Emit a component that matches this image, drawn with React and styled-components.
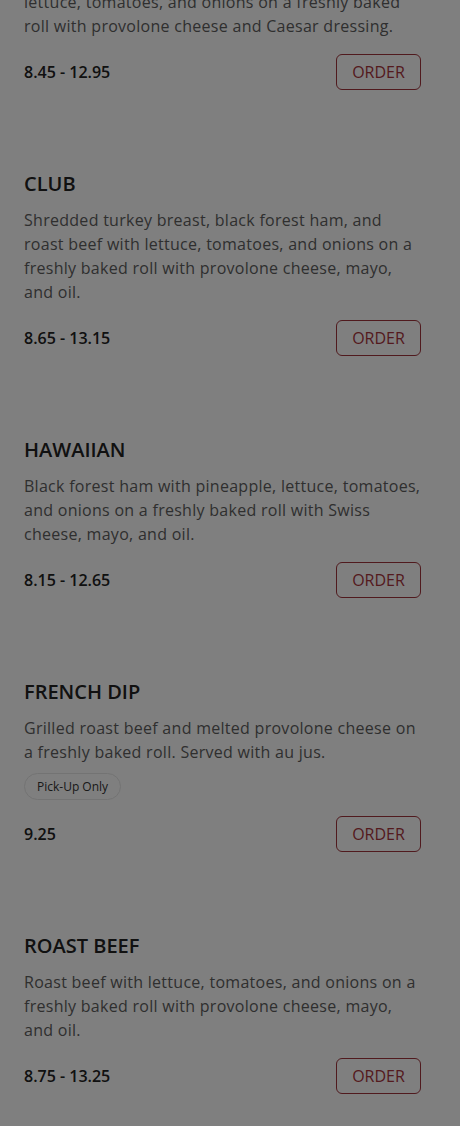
import styled, { createGlobalStyle } from 'styled-components';

const GlobalStyle = createGlobalStyle`
    * { box-sizing: border-box; }
    body {
        margin: 0;
        background: #ffffff;
        font-family: "Open Sans", "Liberation Sans", sans-serif;
        overflow: hidden;
    }
`;

const Page = styled.div`
    width: 460px;
    height: 1126px;
    overflow: hidden;
    background: #ffffff;
`;

// the list is scrolled a little, so the first item starts above the view
const MenuList = styled.div`
    margin-top: -10px;
    padding: 0 39px 0 24px;
`;

const Item = styled.div`
    padding: ${(p) => (p.$first ? '0' : '80px')} 0 0;
`;

const Title = styled.h3`
    margin: 0 0 10px;
    font-size: 20px;
    line-height: 28px;
    font-weight: 600;
    color: #222222;
    text-transform: uppercase;
`;

const Desc = styled.p`
    margin: 0 -2px 0 0;
    font-size: 16px;
    line-height: 24px;
    letter-spacing: 0.28px;
    color: #5e5e5e;
`;

const Pill = styled.span`
    display: inline-block;
    margin-top: 9px;
    padding: 0 12px;
    height: 27px;
    line-height: 25px;
    font-size: 12px;
    color: #333333;
    border: 1px solid #e6e6e6;
    border-radius: 14px;
`;

const Footer = styled.div`
    display: flex;
    align-items: center;
    justify-content: space-between;
    margin-top: 16px;
    height: 36px;
`;

const Price = styled.span`
    font-size: 16px;
    font-weight: 600;
    color: #222222;
`;

const OrderButton = styled.button`
    width: 85px;
    height: 36px;
    padding: 0;
    font-family: inherit;
    font-size: 16px;
    color: #a8343c;
    background: transparent;
    border: 1px solid #a0343c;
    border-radius: 6px;
    cursor: pointer;
`;

const Overlay = styled.div`
    position: fixed;
    inset: 0;
    background: rgba(0, 0, 0, 0.5);
`;

const items = [
    {
        desc: 'lettuce, tomatoes, and onions on a freshly baked roll with provolone cheese and Caesar dressing.',
        price: '8.45 - 12.95',
        first: true,
    },
    {
        title: 'Club',
        desc: 'Shredded turkey breast, black forest ham, and roast beef with lettuce, tomatoes, and onions on a freshly baked roll with provolone cheese, mayo, and oil.',
        price: '8.65 - 13.15',
    },
    {
        title: 'Hawaiian',
        desc: 'Black forest ham with pineapple, lettuce, tomatoes, and onions on a freshly baked roll with Swiss cheese, mayo, and oil.',
        price: '8.15 - 12.65',
    },
    {
        title: 'French Dip',
        desc: 'Grilled roast beef and melted provolone cheese on a freshly baked roll. Served with au jus.',
        pickup: true,
        price: '9.25',
    },
    {
        title: 'Roast Beef',
        desc: 'Roast beef with lettuce, tomatoes, and onions on a freshly baked roll with provolone cheese, mayo, and oil.',
        price: '8.75 - 13.25',
    },
];

const App = () => {
    return (
        <>
            <GlobalStyle />
            <Page>
                <MenuList>
                    {items.map((item, i) => (
                        <Item key={i} $first={item.first}>
                            {item.title && <Title>{item.title}</Title>}
                            <Desc>{item.desc}</Desc>
                            {item.pickup && <Pill>Pick-Up Only</Pill>}
                            <Footer>
                                <Price>{item.price}</Price>
                                <OrderButton>ORDER</OrderButton>
                            </Footer>
                        </Item>
                    ))}
                </MenuList>
            </Page>
            <Overlay />
        </>
    );
};

export default App;
